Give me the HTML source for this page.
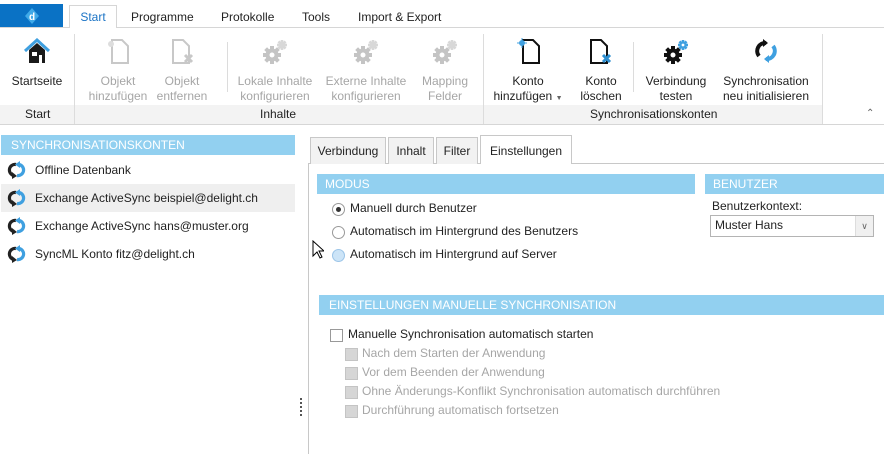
<!DOCTYPE html>
<html><head><meta charset="utf-8"><style>
*{margin:0;padding:0;box-sizing:border-box}
body{width:884px;height:454px;overflow:hidden;background:#fff;font-family:"Segoe UI","Liberation Sans",sans-serif;font-size:12px;color:#222;position:relative}
.a{position:absolute;white-space:nowrap}
.btn{position:absolute;top:74px;text-align:center;line-height:15px;font-size:12px;transform:translateX(-50%)}
.dis{color:#a6a6a6}
.ic{position:absolute;top:38px;transform:translateX(-50%)}
.sep{position:absolute;width:1px;background:#dcdcdc}
.hdr{position:absolute;background:#92d0f0;color:#fff;font-size:12px;line-height:20px;padding-left:8px}
.row{position:absolute;left:1px;width:294px;height:28px;line-height:28px;padding-left:34px;font-size:12px}
.rad{position:absolute;width:13px;height:13px;border:1px solid #999;border-radius:50%;background:#fff}
.cb{position:absolute;width:13px;height:13px;border:1px solid #999;background:#fff}
.cbd{position:absolute;width:13px;height:13px;border:1px solid #c4c4c4;background:#d6d6d6}
.tab{position:absolute;top:137px;height:27px;border:1px solid #c8c8c8;border-bottom:none;background:#f2f2f2;line-height:27px;text-align:center;font-size:12px}
</style></head><body>
<svg width="0" height="0" style="position:absolute"><defs>
<g id="gear"><g><rect x="-2" y="-9" width="4" height="18"/><rect x="-2" y="-9" width="4" height="18" transform="rotate(45)"/><rect x="-2" y="-9" width="4" height="18" transform="rotate(90)"/><rect x="-2" y="-9" width="4" height="18" transform="rotate(135)"/></g><circle r="6.5"/></g>
<g id="sg"><g id="sgi"><rect x="-1.3" y="-5" width="2.6" height="10"/><rect x="-1.3" y="-5" width="2.6" height="10" transform="rotate(45)"/><rect x="-1.3" y="-5" width="2.6" height="10" transform="rotate(90)"/><rect x="-1.3" y="-5" width="2.6" height="10" transform="rotate(135)"/><circle r="3.6"/></g></g>
<g id="sync"><path d="M10 3.5A5.5 5.5 0 1 0 8 14.5" fill="none" stroke="#222" stroke-width="3.2"/><path d="M6 11L11 15L6 18Z" fill="#222"/><path d="M10 14.5A5.5 5.5 0 1 0 12 3.5" fill="none" stroke="#3fa0e0" stroke-width="3.2" transform="translate(1 0)"/><path d="M14 0L9 3.5L14 7Z" fill="#3fa0e0"/></g>
</defs></svg>
<!-- top tabs -->
<div class="a" style="left:0;top:4px;width:63px;height:23px;background:#0a72c5"></div>
<svg class="a" style="left:24px;top:7px" width="16" height="18" viewBox="0 0 16 18"><path d="M8 1L15 9L8 17L1 9Z" fill="#3fa9e8"/><text x="5" y="13" font-size="10" font-weight="bold" fill="#fff" font-family="Liberation Sans">d</text></svg>
<div class="a" style="left:0;top:27px;width:884px;height:1px;background:#d6d6d6"></div>
<div class="a" style="left:69px;top:5px;width:48px;height:23px;border:1px solid #d6d6d6;border-bottom:none;background:#fff;color:#1a73c5;text-align:center;line-height:22px">Start</div>
<div class="a" style="left:131px;top:10px">Programme</div>
<div class="a" style="left:221px;top:10px">Protokolle</div>
<div class="a" style="left:302px;top:10px">Tools</div>
<div class="a" style="left:358px;top:10px">Import &amp; Export</div>
<!-- ribbon -->
<div class="a" style="left:0;top:105px;width:822px;height:19px;background:#f3f3f3"></div>
<div class="a" style="left:0;top:124px;width:884px;height:1px;background:#d6d6d6"></div>
<div class="sep" style="left:74px;top:34px;height:90px"></div>
<div class="sep" style="left:483px;top:34px;height:90px"></div>
<div class="sep" style="left:822px;top:34px;height:90px"></div>
<div class="sep" style="left:227px;top:42px;height:50px"></div>
<div class="sep" style="left:633px;top:42px;height:50px"></div>
<div class="a" style="left:25px;top:106px;line-height:17px">Start</div>
<div class="a" style="left:260px;top:106px;line-height:17px">Inhalte</div>
<div class="a" style="left:590px;top:106px;line-height:17px">Synchronisationskonten</div>
<div class="a" style="left:866px;top:108px;color:#666;font-size:10px">&#8963;</div>

<svg class="ic" style="left:37px" width="28" height="26" viewBox="0 0 28 26"><path d="M2 13L14 2L26 13" fill="none" stroke="#3fa0e0" stroke-width="3"/><path d="M6 12L14 5L22 12V25H6Z" fill="#1a1a1a"/><rect x="9" y="14" width="5" height="4" fill="#fff"/><rect x="16" y="17" width="3" height="8" fill="#fff"/></svg>
<div class="btn" style="left:37px">Startseite<br>&nbsp;</div>

<svg class="ic" style="left:118px" width="26" height="26" viewBox="0 0 26 26"><path d="M7 2H17L23 8V25H7Z" fill="none" stroke="#c8c8c8" stroke-width="2"/><circle cx="6" cy="6" r="3" fill="#ddd"/></svg>
<div class="btn dis" style="left:118px">Objekt<br>hinzufügen</div>
<svg class="ic" style="left:182px" width="26" height="26" viewBox="0 0 26 26"><path d="M4 2H14L20 8V25H4Z" fill="none" stroke="#c8c8c8" stroke-width="2"/><path d="M16 17L23 24M23 17L16 24" stroke="#c8c8c8" stroke-width="3"/></svg>
<div class="btn dis" style="left:182px">Objekt<br>entfernen</div>

<svg class="ic" style="left:275px" width="28" height="28"><use href="#gear" x="11" y="17" fill="#c4c4c4"/><circle cx="11" cy="17" r="2.5" fill="#fff"/><use href="#sg" x="21" y="7" fill="#d8d8d8"/></svg>
<div class="btn dis" style="left:275px">Lokale Inhalte<br>konfigurieren</div>
<svg class="ic" style="left:366px" width="28" height="28"><use href="#gear" x="11" y="17" fill="#c4c4c4"/><circle cx="11" cy="17" r="2.5" fill="#fff"/><use href="#sg" x="21" y="7" fill="#d8d8d8"/></svg>
<div class="btn dis" style="left:366px">Externe Inhalte<br>konfigurieren</div>
<svg class="ic" style="left:445px" width="28" height="28"><use href="#gear" x="11" y="17" fill="#c4c4c4"/><circle cx="11" cy="17" r="2.5" fill="#fff"/><use href="#sg" x="21" y="7" fill="#d8d8d8"/></svg>
<div class="btn dis" style="left:445px">Mapping<br>Felder</div>

<svg class="ic" style="left:530px" width="28" height="26" viewBox="0 0 28 26"><path d="M7 2H17L23 8V25H7Z" fill="none" stroke="#111" stroke-width="2"/><circle cx="6" cy="5" r="3" fill="#3fa0e0"/><path d="M6 0V10M1 5H11" stroke="#3fa0e0" stroke-width="1"/></svg>
<div class="btn" style="left:528px">Konto<br>hinzufügen <span style="font-size:7px;color:#666">&#9660;</span></div>
<svg class="ic" style="left:601px" width="26" height="26" viewBox="0 0 26 26"><path d="M3 2H13L19 8V25H3Z" fill="none" stroke="#111" stroke-width="2"/><path d="M15 17L22 24M22 17L15 24" stroke="#2f8fd0" stroke-width="3"/></svg>
<div class="btn" style="left:601px">Konto<br>löschen</div>
<svg class="ic" style="left:676px" width="28" height="28"><use href="#gear" x="11" y="17" fill="#111"/><circle cx="11" cy="17" r="2.5" fill="#fff"/><use href="#sg" x="21" y="7" fill="#3fa0e0"/><circle cx="21" cy="7" r="1.4" fill="#fff"/></svg>
<div class="btn" style="left:676px">Verbindung<br>testen</div>
<svg class="ic" style="left:766px" width="26" height="26" viewBox="0 0 26 26"><path d="M13 5A8 8 0 0 0 6 18" fill="none" stroke="#111" stroke-width="4"/><path d="M10 1L15 5L10 9Z" fill="#111"/><path d="M13 21A8 8 0 0 0 20 8" fill="none" stroke="#3fa0e0" stroke-width="4"/><path d="M16 17L11 21L16 25Z" fill="#3fa0e0"/></svg>
<div class="btn" style="left:766px">Synchronisation<br>neu initialisieren</div>

<!-- left panel -->
<div class="hdr" style="left:1px;top:135px;width:294px;height:20px;line-height:20px;padding-left:10px">SYNCHRONISATIONSKONTEN</div>
<div class="row" style="top:156px">Offline Datenbank</div>
<div class="row" style="top:184px;background:#efefef">Exchange ActiveSync beispiel@delight.ch</div>
<div class="row" style="top:212px">Exchange ActiveSync hans@muster.org</div>
<div class="row" style="top:240px">SyncML Konto fitz@delight.ch</div>
<svg class="a" style="left:6px;top:161px" width="24" height="110"><use href="#sync"/><use href="#sync" y="28"/><use href="#sync" y="56"/><use href="#sync" y="84"/></svg>
<svg class="a" style="left:299px;top:398px" width="4" height="18"><g fill="#555"><rect x="1" y="0" width="2" height="2"/><rect x="1" y="4" width="2" height="2"/><rect x="1" y="8" width="2" height="2"/><rect x="1" y="12" width="2" height="2"/><rect x="1" y="16" width="2" height="2"/></g></svg>

<!-- right pane -->
<div class="a" style="left:308px;top:163px;width:576px;height:1px;background:#c8c8c8"></div>
<div class="a" style="left:308px;top:163px;width:1px;height:291px;background:#c8c8c8"></div>
<div class="tab" style="left:310px;width:76px">Verbindung</div>
<div class="tab" style="left:388px;width:46px">Inhalt</div>
<div class="tab" style="left:436px;width:42px">Filter</div>
<div class="tab" style="left:480px;top:135px;height:29px;width:92px;background:#fff;line-height:31px">Einstellungen</div>

<div class="hdr" style="left:317px;top:174px;width:378px;height:20px">MODUS</div>
<div class="hdr" style="left:705px;top:174px;width:179px;height:20px">BENUTZER</div>
<div class="rad" style="left:332px;top:203px"></div><div class="a" style="left:336px;top:207px;width:5px;height:5px;border-radius:50%;background:#333"></div>
<div class="a" style="left:350px;top:201px">Manuell durch Benutzer</div>
<div class="rad" style="left:332px;top:226px"></div>
<div class="a" style="left:350px;top:224px">Automatisch im Hintergrund des Benutzers</div>
<div class="rad" style="left:332px;top:249px;background:#cce4f7;border-color:#9cc5e8"></div>
<div class="a" style="left:350px;top:247px">Automatisch im Hintergrund auf Server</div>
<svg class="a" style="left:312px;top:240px" width="12" height="20"><path d="M1 1V16L5 12L8 18L10 17L7 11H12Z" fill="#fff" stroke="#000" stroke-width="1"/></svg>

<div class="a" style="left:712px;top:199px">Benutzerkontext:</div>
<div class="a" style="left:710px;top:215px;width:164px;height:22px;border:1px solid #b4b4b4;background:#fff;padding-left:4px;line-height:19px">Muster Hans</div>
<div class="a" style="left:855px;top:216px;width:18px;height:20px;border-left:1px solid #ddd;background:#f0f0f0;color:#666;text-align:center;line-height:20px;font-size:9px">&#8744;</div>

<div class="hdr" style="left:319px;top:295px;width:565px;height:20px;padding-left:10px">EINSTELLUNGEN MANUELLE SYNCHRONISATION</div>
<div class="cb" style="left:330px;top:329px"></div>
<div class="a" style="left:348px;top:327px">Manuelle Synchronisation automatisch starten</div>
<div class="cbd" style="left:345px;top:348px"></div><div class="a dis" style="left:362px;top:346px">Nach dem Starten der Anwendung</div>
<div class="cbd" style="left:345px;top:367px"></div><div class="a dis" style="left:362px;top:365px">Vor dem Beenden der Anwendung</div>
<div class="cbd" style="left:345px;top:386px"></div><div class="a dis" style="left:362px;top:384px">Ohne Änderungs-Konflikt Synchronisation automatisch durchführen</div>
<div class="cbd" style="left:345px;top:405px"></div><div class="a dis" style="left:362px;top:403px">Durchführung automatisch fortsetzen</div>
</body></html>
